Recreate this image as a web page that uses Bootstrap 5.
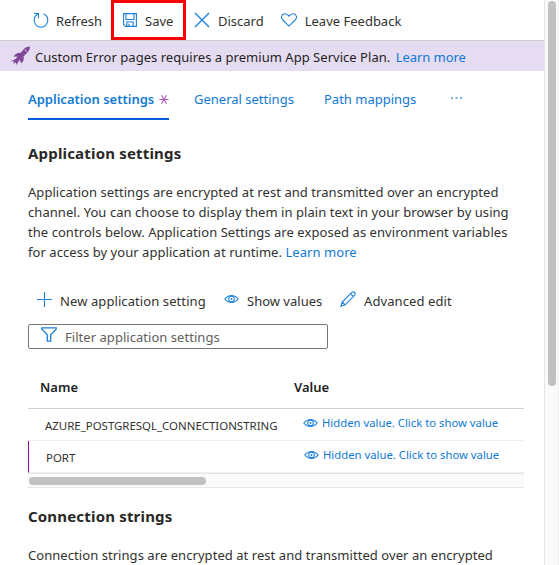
<!DOCTYPE html>
<html lang="en">
<head>
<meta charset="utf-8">
<meta name="viewport" content="width=device-width, initial-scale=1">
<title>Application settings</title>
<link href="https://cdn.jsdelivr.net/npm/bootstrap@5.3.0/dist/css/bootstrap.min.css" rel="stylesheet">
<style>
html,body{height:100%;overflow:hidden}
body{font-family:"Noto Sans","Open Sans",sans-serif;font-size:13px;line-height:20px;color:#323130;background:#fff}
a{color:#1079d3;text-decoration:none}
svg{fill:none;stroke:#1c80d8;stroke-width:1.1;flex:none;display:block}
.pane{width:544px;height:565px}
.toolbar{height:41px;border-bottom:1px solid #d0cdd2;padding-left:33px}
.cmd{color:#323130;background:none;border:0;padding:0;font-size:13px;line-height:20px;white-space:nowrap;display:flex;align-items:center}
.toolbar .cmd{gap:8px;height:40px}
.toolbar .cmd span{position:relative;top:1px}
.toolbar .refresh{width:78px;gap:7px;letter-spacing:-.1px}
.toolbar .save-box{width:75px;border:3px solid #f00;padding-left:9px}
.notice{height:30px;background:#e6dcf1;padding-left:10px;color:#1f1f1f;white-space:nowrap}
.notice svg{fill:#804998;stroke:none}
.notice span{padding:2px 0 0 5px;letter-spacing:.03px}
.notice a{margin-left:2px;letter-spacing:-.05px}
.body-area{padding:18px 21px 0 28px}
.tabs{height:31px;border:0}
.tabs .nav-link{padding:0;height:31px;line-height:20px;color:#1079d3;border:0;white-space:nowrap}
.tabs .nav-link.active{font-weight:600;width:141px;border-bottom:2px solid #015cda;color:#1079d3}
.tabs svg{stroke:#a857bd}
.more svg{fill:#72b0e3;stroke:none}
h2{font-size:15px;line-height:20px;font-weight:700;margin:0;color:#292827;letter-spacing:.18px}
.intro{margin:19px 0 0;white-space:nowrap;letter-spacing:.055px}
.intro div{height:20px}
.filter{width:300px;height:25px;border:1px solid #77777a;border-radius:2px;color:#605e5c;padding:0 0 0 12px;letter-spacing:.04px}
.grid-head{height:42px;border-bottom:1px solid #c8d1d9;font-weight:600;color:#201f1e;margin-top:18px;padding:0 0 2px 12px}
.grid-row{height:32px;border-bottom:1px solid #f0f0f0;font-size:11.45px;white-space:nowrap}
.grid-row .key{width:275px;padding:2px 0 0 17px}
.grid-row a{font-size:11.3px;padding-bottom:3px}
.grid-row.dirty{border-left:1px solid #881798}
.grid-list{width:496px}
.hbar{height:15px;border-top:1px solid #e4e4e4;border-bottom:1px solid #e9e9e9;background:#fafafa;padding:3px 1px}
.hbar div{width:177px;height:8px;border-radius:4px;background:#c1c1c1}
.vbar{width:15px;height:565px;border-left:1px solid #e5e5e5;border-right:1px solid #eee;background:#fafafa;padding:1px 3px}
.vbar div{width:8px;height:385px;border-radius:4px;background:#c1c1c1}
</style>
</head>
<body>
<svg class="d-none"><symbol id="eye" viewBox="0 0 16 10"><path d="M.8 5Q4 1.200 8 1.200T15.200 5Q12 8.800 8 8.800T.8 5Z"/><circle cx="8" cy="5" r="3"/><circle cx="8" cy="5" r=".5"/></symbol></svg>
<div class="d-flex">
<main class="pane overflow-hidden">
  <div class="toolbar d-flex">
    <button class="cmd refresh"><svg width="16" height="16" viewBox="0 0 16 16"><path d="M1 1.500H5.500V6M5.500 1.800A7 7 0 0 0 8 15.200A7 7 0 0 0 10.500 1.800"/></svg><span>Refresh</span></button>
    <button class="cmd save-box"><svg width="14" height="14" viewBox="0 0 14 14"><path d="M.6.600h12.800v12.800H2.500L.6 11.500ZM3 .6v5.900h8V.6M3.800 13.400V9h6.400v4.400M6 10.800v2.600"/></svg><span>Save</span></button>
    <button class="cmd ms-2"><svg width="16" height="16" viewBox="0 0 16 16"><path stroke-width="1.400" d="M1 1l14 14M15 1L1 15"/></svg><span>Discard</span></button>
    <button class="cmd" style="margin-left:17px"><svg width="16" height="14" viewBox="0 0 16 14"><path d="M8 13.100L1.800 7C-.8 4.200 1 .8 4 .8 6 .8 7.200 2.200 8 3.200 8.800 2.200 10 .8 12 .8 15 .8 16.800 4.200 14.200 7Z"/></svg><span>Leave Feedback</span></button>
  </div>
  <div class="notice d-flex align-items-center">
    <svg width="20" height="20" viewBox="0 0 20 20"><path d="M20 .5C17.500.500 15.500 1.200 14 3L10.500 7C8 6.300 6 7.500 3.500 10.500L7.500 10.700 5.500 13 0 15.500 4 15 3 17.500 6 16.500 6.500 19 8.500 15.500 10 13.700 11 17.500C13.500 15.500 14.200 13.500 13.500 10.500L17.500 6.500C19.300 4.500 20 3 20 .5Z"/><path d="M14.800 3.700l2.500 2.300" style="stroke:#e6dcf1;stroke-width:.9"/></svg>
    <span>Custom Error pages requires a premium App Service Plan. <a href="#">Learn more</a></span>
  </div>
  <div class="body-area">
    <nav class="nav tabs flex-nowrap">
      <a class="nav-link active d-flex justify-content-between" href="#"><span>Application settings</span><svg width="10" height="20" viewBox="0 0 10 20"><path d="M.5 10.500h9M2.500 6.300l5 8.400M7.500 6.300l-5 8.400"/></svg></a>
      <a class="nav-link" href="#" style="margin-left:25px;width:130px">General settings</a>
      <a class="nav-link" href="#" style="width:126px">Path mappings</a>
      <a class="nav-link more" href="#"><svg width="12" height="20" viewBox="0 0 12 20"><path d="M1 8h2v2H1zM5.500 8h2v2h-2zM10 8h2v2h-2z"/></svg></a>
    </nav>
    <h2 style="margin-top:23px">Application settings</h2>
    <div class="intro">
      <div>Application settings are encrypted at rest and transmitted over an encrypted</div>
      <div>channel. You can choose to display them in plain text in your browser by using</div>
      <div>the controls below. Application Settings are exposed as environment variables</div>
      <div>for access by your application at runtime. <a href="#">Learn more</a></div>
    </div>
    <div class="d-flex align-items-center" style="margin:29px 0 0 8px">
      <button class="cmd gap-2" style="width:188px;letter-spacing:.09px"><svg width="16" height="16" viewBox="0 0 16 16" class="mb-1"><path d="M8.500 1v15M1 8.500h15"/></svg><span>New application setting</span></button>
      <button class="cmd gap-2" style="width:116px"><svg width="15" height="10" class="mb-1"><use href="#eye"/></svg><span>Show values</span></button>
      <button class="cmd gap-2" style="letter-spacing:.1px"><svg width="16" height="16" viewBox="0 0 16 16" class="mb-1"><path d="M1 15.200L2.200 11 11.800 1.400Q13.200.300 14.500 1.500T14.700 4.200L5.200 13.800ZM10.500 2.700L13.400 5.600M2.200 11L5.200 13.800"/></svg><span>Advanced edit</span></button>
    </div>
    <div class="filter d-flex align-items-center" style="margin-top:13px"><svg width="16" height="15" viewBox="0 0 16 15" class="mb-1"><path stroke-width="1.300" d="M.8.800h14.400v1.400L9.700 7.800v6.400H6.300V7.800L.8 2.200Z"/></svg><span class="ms-2">Filter application settings</span></div>
    <div class="grid-list">
      <div class="grid-head d-flex align-items-center"><span style="width:254px">Name</span><span>Value</span></div>
      <div class="grid-row d-flex align-items-center"><span class="key">AZURE_POSTGRESQL_CONNECTIONSTRING</span><a class="d-flex align-items-center gap-1" href="#"><svg width="15" height="10"><use href="#eye"/></svg><span>Hidden value. Click to show value</span></a></div>
      <div class="grid-row dirty d-flex align-items-center"><span class="key">PORT</span><a class="d-flex align-items-center gap-1" href="#"><svg width="15" height="10"><use href="#eye"/></svg><span>Hidden value. Click to show value</span></a></div>
      <div class="hbar"><div></div></div>
    </div>
    <h2 style="margin-top:18px">Connection strings</h2>
    <div class="intro"><div>Connection strings are encrypted at rest and transmitted over an encrypted</div></div>
  </div>
</main>
<aside class="vbar"><div></div></aside>
</div>
<script src="https://cdn.jsdelivr.net/npm/bootstrap@5.3.0/dist/js/bootstrap.bundle.min.js"></script>
</body>
</html>
